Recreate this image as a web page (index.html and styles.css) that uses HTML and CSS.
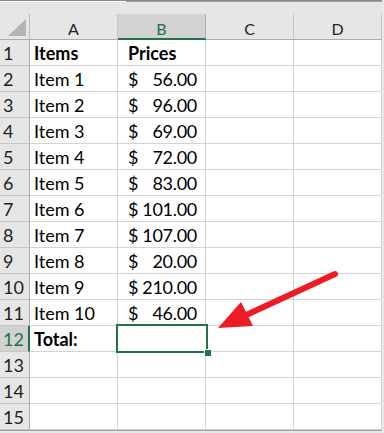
FILE: index.html
```html
<!DOCTYPE html>
<html>
<head>
<meta charset="utf-8">
<link rel="stylesheet" href="styles.css">
</head>
<body>
<div class="sheet">
  <div class="topbar"><span class="tb-left"></span><span class="tb-right"></span></div>
  <div class="grid">
    <div class="corner"><span class="tri"></span></div>
    <div class="ch">A</div>
    <div class="ch sel">B</div>
    <div class="ch">C</div>
    <div class="ch">D</div>

    <div class="rh">1</div><div class="c b">Items</div><div class="c p b">Prices</div><div class="c"></div><div class="c"></div>
    <div class="rh">2</div><div class="c">Item 1</div><div class="c p"><span>$</span><span class="n">56.00</span></div><div class="c"></div><div class="c"></div>
    <div class="rh">3</div><div class="c">Item 2</div><div class="c p"><span>$</span><span class="n">96.00</span></div><div class="c"></div><div class="c"></div>
    <div class="rh">4</div><div class="c">Item 3</div><div class="c p"><span>$</span><span class="n">69.00</span></div><div class="c"></div><div class="c"></div>
    <div class="rh">5</div><div class="c">Item 4</div><div class="c p"><span>$</span><span class="n">72.00</span></div><div class="c"></div><div class="c"></div>
    <div class="rh">6</div><div class="c">Item 5</div><div class="c p"><span>$</span><span class="n">83.00</span></div><div class="c"></div><div class="c"></div>
    <div class="rh">7</div><div class="c">Item 6</div><div class="c p"><span>$</span><span class="n">101.00</span></div><div class="c"></div><div class="c"></div>
    <div class="rh">8</div><div class="c">Item 7</div><div class="c p"><span>$</span><span class="n">107.00</span></div><div class="c"></div><div class="c"></div>
    <div class="rh">9</div><div class="c">Item 8</div><div class="c p"><span>$</span><span class="n">20.00</span></div><div class="c"></div><div class="c"></div>
    <div class="rh">10</div><div class="c">Item 9</div><div class="c p"><span>$</span><span class="n">210.00</span></div><div class="c"></div><div class="c"></div>
    <div class="rh">11</div><div class="c">Item 10</div><div class="c p"><span>$</span><span class="n">46.00</span></div><div class="c"></div><div class="c"></div>
    <div class="rh sel">12</div><div class="c b">Total:</div><div class="c active"><span class="handle"></span></div><div class="c"></div><div class="c"></div>
    <div class="rh">13</div><div class="c"></div><div class="c"></div><div class="c"></div><div class="c"></div>
    <div class="rh">14</div><div class="c"></div><div class="c"></div><div class="c"></div><div class="c"></div>
    <div class="rh">15</div><div class="c"></div><div class="c"></div><div class="c"></div><div class="c"></div>
  </div>
  <svg class="arrow" width="384" height="433" viewBox="0 0 384 433">
    <line x1="335" y1="274" x2="244" y2="316" stroke="#ed1c24" stroke-width="6" stroke-linecap="round"/>
    <polygon points="218,328 241,302 253,326" fill="#ed1c24"/>
  </svg>
</div>
</body>
</html>
```
FILE: styles.css
```css
html, body {
  margin: 0;
  padding: 0;
  background: #ffffff;
}
.sheet {
  position: relative;
  width: 384px;
  height: 433px;
  background: #e9e9e9;
  overflow: hidden;
  font-family: Lato, "Liberation Sans", sans-serif;
  color: #111;
}
.topbar {
  display: flex;
  height: 14px;
  box-sizing: border-box;
  border-top: 1px solid #8c8c8c;
  background: #e6e6e6;
  width: 382px;
}
.tb-left {
  width: 126px;
  height: 1px;
  background: #ffffff;
}
.tb-right {
  flex: 1;
  height: 1px;
  background: #9a9a9a;
}
.grid {
  display: grid;
  grid-template-columns: 30px 88px 88px 88px 88px;
  grid-template-rows: 26px repeat(15, 26px);
  width: 382px;
  box-sizing: border-box;
  border-right: 1px solid #9c9c9c;
  border-bottom: 1px solid #9c9c9c;
  background: #fff;
  height: 417px;
}
.corner {
  position: relative;
  background: #e6e6e6;
  border-right: 1px solid #bcbcbc;
  border-bottom: 1px solid #ababab;
  box-sizing: border-box;
}
.tri {
  position: absolute;
  right: 3px;
  bottom: 3px;
  width: 0;
  height: 0;
  border-left: 18px solid transparent;
  border-bottom: 17px solid #b4b4b4;
}
.ch {
  background: #e6e6e6;
  border-right: 1px solid #c6c6c6;
  border-bottom: 1px solid #ababab;
  box-sizing: border-box;
  text-align: center;
  font-size: 16px;
  line-height: 30px;
  color: #222;
}
.ch.sel {
  background: #d2d2d2;
  color: #217346;
  border-bottom: 2px solid #217346;
  border-right-color: #ababab;
}
.rh {
  background: #e6e6e6;
  border-right: 1px solid #ababab;
  border-bottom: 1px solid #c6c6c6;
  box-sizing: border-box;
  font-size: 18px;
  line-height: 26px;
  padding-left: 3px;
  color: #222;
}
.rh.sel {
  background: #d2d2d2;
  color: #217346;
  border-right: 2px solid #217346;
}
.c {
  border-right: 1px solid #d4d4d4;
  border-bottom: 1px solid #d4d4d4;
  box-sizing: border-box;
  font-size: 18px;
  line-height: 26px;
  padding-left: 4px;
  white-space: nowrap;
  color: #000;
}
.c.b {
  font-weight: bold;
}
.c.p {
  padding-left: 10px;
  padding-right: 8px;
}
.c.p:not(.b) {
  display: flex;
  justify-content: space-between;
  gap: 3px;
}
.n {
  letter-spacing: -0.3px;
}
.c.active {
  position: relative;
  border: none;
  outline: 2px solid #217346;
  outline-offset: -1px;
  margin: -1px 0 0 -1px;
  width: 90px;
  height: 27px;
}
.handle {
  position: absolute;
  right: -4px;
  bottom: -4px;
  width: 6px;
  height: 6px;
  background: #217346;
  border: 1px solid #fff;
  border-width: 1px 0 0 1px;
}
.arrow {
  position: absolute;
  left: 0;
  top: 0;
  pointer-events: none;
}
```
